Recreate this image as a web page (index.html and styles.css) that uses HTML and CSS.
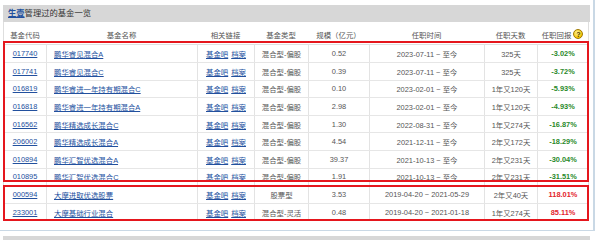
FILE: index.html
```html
<!DOCTYPE html>
<html lang="zh-CN">
<head>
  <meta charset="UTF-8" />
  <title>基金经理管理过的基金</title>
  <link rel="stylesheet" href="styles.css">
</head>
<body>
  <div class="panel">
    <div class="panel-title"><a href="#">生壹</a>管理过的基金一览</div>
    <div class="fund-table">
      <div class="row head">
        <div class="cell">基金代码</div>
        <div class="cell">基金名称</div>
        <div class="cell">相关链接</div>
        <div class="cell">基金类型</div>
        <div class="cell">规模（亿元）</div>
        <div class="cell">任职时间</div>
        <div class="cell">任职天数</div>
        <div class="cell">任职回报 <span class="help">?</span></div>
      </div>

      <div class="group group-now">
        <div class="row">
          <div class="cell"><a href="#">017740</a></div>
          <div class="cell name"><a href="#">鹏华睿见混合A</a></div>
          <div class="cell links"><a href="#">基金吧</a><a href="#">档案</a></div>
          <div class="cell">混合型-偏股</div>
          <div class="cell">0.52</div>
          <div class="cell">2023-07-11 ~ 至今</div>
          <div class="cell">325天</div>
          <div class="cell down">-3.02%</div>
        </div>
        <div class="row">
          <div class="cell"><a href="#">017741</a></div>
          <div class="cell name"><a href="#">鹏华睿见混合C</a></div>
          <div class="cell links"><a href="#">基金吧</a><a href="#">档案</a></div>
          <div class="cell">混合型-偏股</div>
          <div class="cell">0.39</div>
          <div class="cell">2023-07-11 ~ 至今</div>
          <div class="cell">325天</div>
          <div class="cell down">-3.72%</div>
        </div>
        <div class="row">
          <div class="cell"><a href="#">016819</a></div>
          <div class="cell name"><a href="#">鹏华睿进一年持有期混合C</a></div>
          <div class="cell links"><a href="#">基金吧</a><a href="#">档案</a></div>
          <div class="cell">混合型-偏股</div>
          <div class="cell">0.10</div>
          <div class="cell">2023-02-01 ~ 至今</div>
          <div class="cell">1年又120天</div>
          <div class="cell down">-5.93%</div>
        </div>
        <div class="row">
          <div class="cell"><a href="#">016818</a></div>
          <div class="cell name"><a href="#">鹏华睿进一年持有期混合A</a></div>
          <div class="cell links"><a href="#">基金吧</a><a href="#">档案</a></div>
          <div class="cell">混合型-偏股</div>
          <div class="cell">2.98</div>
          <div class="cell">2023-02-01 ~ 至今</div>
          <div class="cell">1年又120天</div>
          <div class="cell down">-4.93%</div>
        </div>
        <div class="row">
          <div class="cell"><a href="#">016562</a></div>
          <div class="cell name"><a href="#">鹏华精选成长混合C</a></div>
          <div class="cell links"><a href="#">基金吧</a><a href="#">档案</a></div>
          <div class="cell">混合型-偏股</div>
          <div class="cell">1.30</div>
          <div class="cell">2022-08-31 ~ 至今</div>
          <div class="cell">1年又274天</div>
          <div class="cell down">-16.87%</div>
        </div>
        <div class="row">
          <div class="cell"><a href="#">206002</a></div>
          <div class="cell name"><a href="#">鹏华精选成长混合A</a></div>
          <div class="cell links"><a href="#">基金吧</a><a href="#">档案</a></div>
          <div class="cell">混合型-偏股</div>
          <div class="cell">4.54</div>
          <div class="cell">2021-12-11 ~ 至今</div>
          <div class="cell">2年又172天</div>
          <div class="cell down">-18.29%</div>
        </div>
        <div class="row">
          <div class="cell"><a href="#">010894</a></div>
          <div class="cell name"><a href="#">鹏华汇智优选混合A</a></div>
          <div class="cell links"><a href="#">基金吧</a><a href="#">档案</a></div>
          <div class="cell">混合型-偏股</div>
          <div class="cell">39.37</div>
          <div class="cell">2021-10-13 ~ 至今</div>
          <div class="cell">2年又231天</div>
          <div class="cell down">-30.04%</div>
        </div>
        <div class="row">
          <div class="cell"><a href="#">010895</a></div>
          <div class="cell name"><a href="#">鹏华汇智优选混合C</a></div>
          <div class="cell links"><a href="#">基金吧</a><a href="#">档案</a></div>
          <div class="cell">混合型-偏股</div>
          <div class="cell">1.91</div>
          <div class="cell">2021-10-13 ~ 至今</div>
          <div class="cell">2年又231天</div>
          <div class="cell down">-31.51%</div>
        </div>
      </div>

      <div class="group group-past">
        <div class="row">
          <div class="cell"><a href="#">000594</a></div>
          <div class="cell name"><a href="#">大摩进取优选股票</a></div>
          <div class="cell links"><a href="#">基金吧</a><a href="#">档案</a></div>
          <div class="cell">股票型</div>
          <div class="cell">3.53</div>
          <div class="cell">2019-04-20 ~ 2021-05-29</div>
          <div class="cell">2年又40天</div>
          <div class="cell up">118.01%</div>
        </div>
        <div class="row">
          <div class="cell"><a href="#">233001</a></div>
          <div class="cell name"><a href="#">大摩基础行业混合</a></div>
          <div class="cell links"><a href="#">基金吧</a><a href="#">档案</a></div>
          <div class="cell">混合型-灵活</div>
          <div class="cell">0.48</div>
          <div class="cell">2019-04-20 ~ 2021-01-18</div>
          <div class="cell">1年又274天</div>
          <div class="cell up">85.11%</div>
        </div>
      </div>
    </div>
  </div>
  <div class="panel-title next"></div>
</body>
</html>
```

FILE: styles.css
```css
* {
  margin: 0;
  padding: 0;
  box-sizing: border-box;
}
body {
  background: #fff;
  font-family: 'Liberation Sans', 'Noto Sans CJK SC', sans-serif;
  font-size: 7.4px;
  color: #555;
  overflow: hidden;
}
a {
  color: #22509e;
  text-decoration: underline;
}
.panel {
  width: 595px;
  height: 231px;
  padding-top: 5px;
  border-right: 2px solid #c9d8e5;
  border-bottom: 1px solid #c9d8e5;
}
.panel-title {
  height: 17px;
  width: 587px;
  margin-left: 3px;
  background: #d7d7d7;
  padding-left: 5px;
  font-size: 8.3px;
  line-height: 17px;
  color: #333;
}
.panel-title a {
  font-weight: bold;
}
/* top of the next block, cut off by the frame */
.panel-title.next {
  height: 4px;
  margin-top: 5px;
}
.fund-table {
  width: 586px;
  margin-left: 3px;
  border-left: 1px solid #dedede;
  border-right: 1px solid #dedede;
}
.row {
  display: grid;
  grid-template-columns: 42px 151px 57px 54px 61px 115px 53px 51px;
  height: 17.6px;
  border-bottom: 1px solid #e6e6e6;
}
.row .cell {
  display: flex;
  align-items: center;
  justify-content: center;
  white-space: nowrap;
  border-left: 1px solid #e3e3e3;
}
.row .cell:first-child {
  border-left: none;
}
.head {
  height: 23.4px;
  padding-top: 2px;
  border-bottom: 1px solid #e0e0e0;
}
.head .cell {
  border-left: none;
  color: #555;
}
.help {
  display: inline-flex;
  align-items: center;
  justify-content: center;
  width: 10px;
  height: 10px;
  margin-left: 2px;
  border-radius: 50%;
  border: 1px solid #a07a00;
  background: radial-gradient(circle at 40% 35%, #fff6a0, #f2c200 70%);
  color: #4a3a00;
  font-weight: bold;
  font-size: 7px;
  line-height: 1;
}
.cell.name {
  justify-content: flex-start;
  padding-left: 7px;
}
.cell.links {
  gap: 3px;
}
.down {
  color: #2a8a2a;
  font-weight: bold;
}
.up {
  color: #e3232b;
  font-weight: bold;
}
.group {
  position: relative;
}
/* red marker boxes drawn over the rows */
.group::after {
  content: "";
  position: absolute;
  left: -1px;
  right: -1px;
  border: 2px solid #e5161d;
  pointer-events: none;
}
.group-now::after {
  top: -4.4px;
  bottom: 4.5px;
}
.group-past::after {
  top: -1.2px;
  bottom: 0.4px;
}
```
